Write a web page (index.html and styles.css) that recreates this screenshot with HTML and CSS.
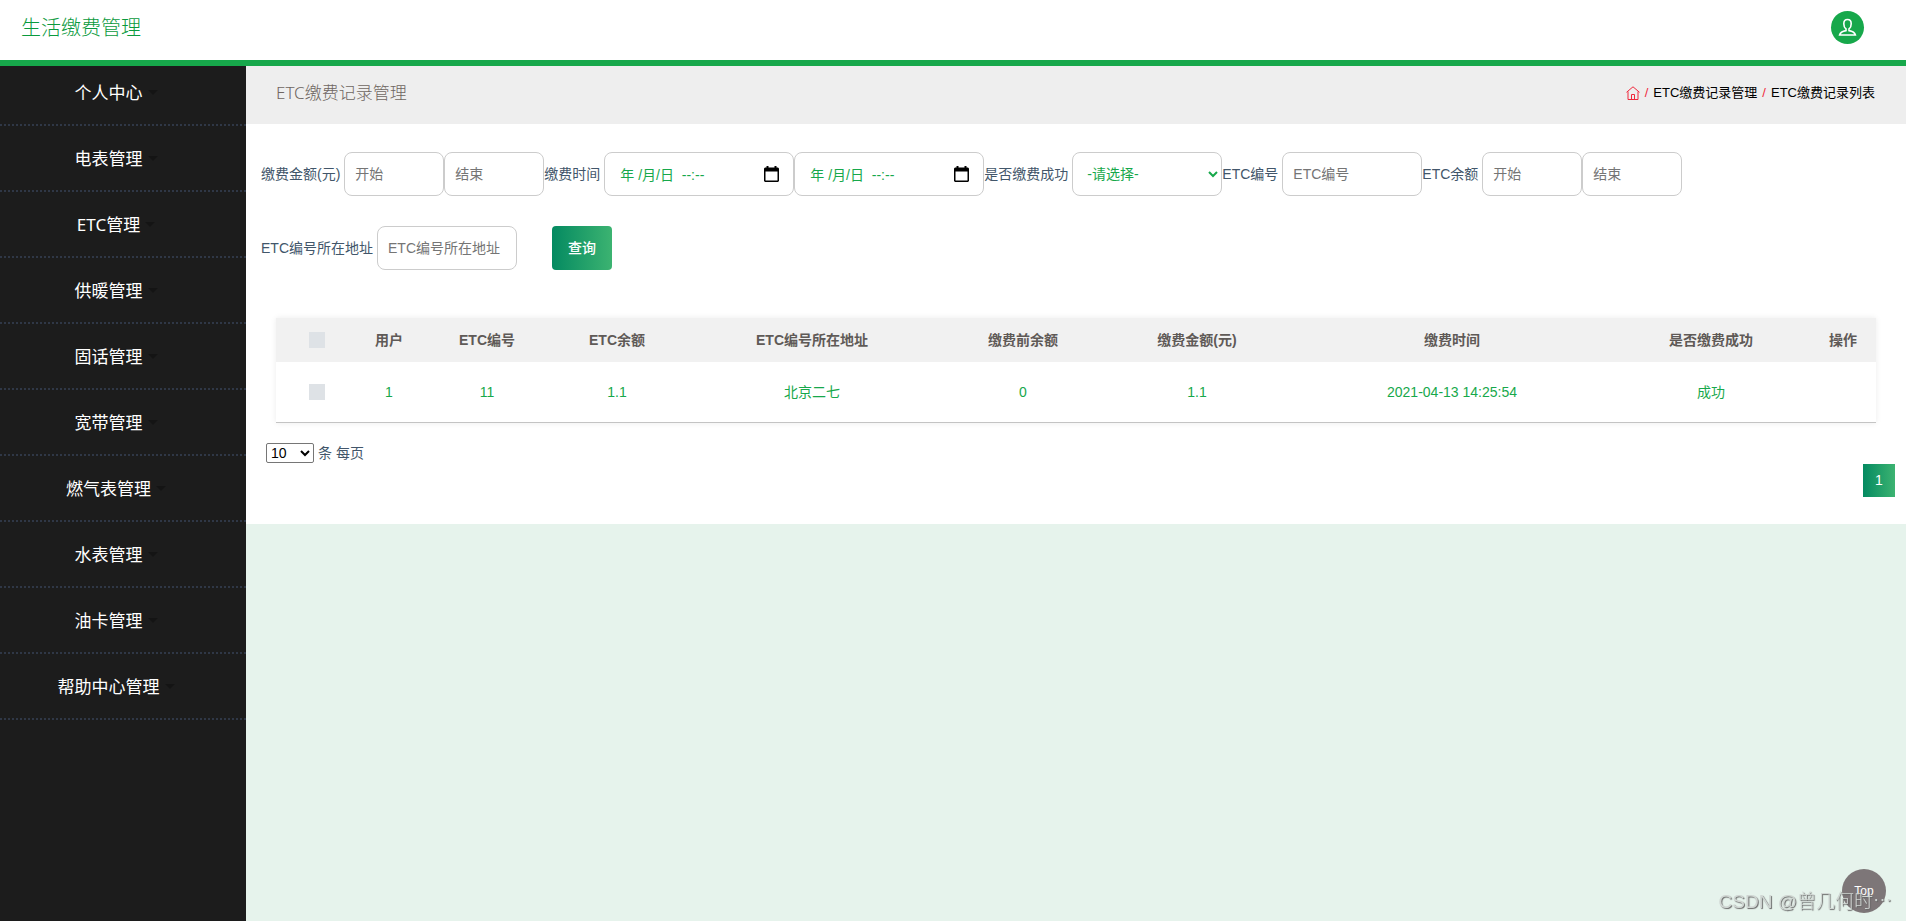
FILE: index.html
```html
<!DOCTYPE html>
<html lang="zh-CN">
<head>
<meta charset="utf-8">
<title>生活缴费管理</title>
<link rel="stylesheet" href="styles.css">
</head>
<body>
<header class="topbar">
  <h1 class="brand">生活缴费管理</h1>
  <button class="avatar" type="button" aria-label="用户">
    <svg viewBox="0 0 33 33" aria-hidden="true"><path d="M16.5 8.500c-2.500 0-3.700 1.600-3.700 4.200 0 2.300.7 4.200 2.200 5.300v1.600c-3.800.6-5.800 1.900-6.400 4.400h15.800c-.6-2.500-2.600-3.800-6.400-4.400V18c1.500-1.100 2.200-3 2.200-5.300 0-2.600-1.200-4.200-3.700-4.200z"/></svg>
  </button>
</header>
<div class="layout">
  <nav class="sidebar">
    <ul class="menu">
      <li><a href="#">个人中心<i class="caret"></i></a></li>
      <li><a href="#">电表管理<i class="caret"></i></a></li>
      <li><a href="#">ETC管理<i class="caret"></i></a></li>
      <li><a href="#">供暖管理<i class="caret"></i></a></li>
      <li><a href="#">固话管理<i class="caret"></i></a></li>
      <li><a href="#">宽带管理<i class="caret"></i></a></li>
      <li><a href="#">燃气表管理<i class="caret"></i></a></li>
      <li><a href="#">水表管理<i class="caret"></i></a></li>
      <li><a href="#">油卡管理<i class="caret"></i></a></li>
      <li><a href="#">帮助中心管理<i class="caret"></i></a></li>
    </ul>
  </nav>
  <main class="content">
    <div class="page-head">
      <h2 class="page-title">ETC缴费记录管理</h2>
      <nav class="crumbs" aria-label="路径">
        <a class="home" href="#" aria-label="首页"><svg viewBox="0 0 14 14" aria-hidden="true"><path d="M.5 6.300 7 .8l6.500 5.500M2 5.500v8h10v-8M5.500 13.500V8.500h3v5"/></svg></a>
        <span class="slash">/</span>
        <a href="#">ETC缴费记录管理</a>
        <span class="slash">/</span>
        <span>ETC缴费记录列表</span>
      </nav>
    </div>
    <section class="panel">
      <form class="filters">
        <div class="field">
          <label for="amount-from">缴费金额(元)</label>
          <input id="amount-from" class="short" type="text" placeholder="开始"><input class="short" type="text" placeholder="结束" aria-label="缴费金额结束">
        </div>
        <div class="field">
          <label for="time-from">缴费时间</label>
          <div class="datetime">
            <input id="time-from" type="text" value="年 /月/日 &nbsp;--:--">
            <button type="button" aria-label="选择日期"><svg viewBox="0 0 15 16" aria-hidden="true"><path d="M2.500 0h2v1.500h6V0h2v1.500H14l1 1V15l-1 1H1l-1-1V2.500l1-1h1.500zM1.500 5.500v9h12v-9z" fill-rule="evenodd"/></svg></button>
          </div>
          <div class="datetime">
            <input type="text" value="年 /月/日 &nbsp;--:--" aria-label="缴费时间结束">
            <button type="button" aria-label="选择日期"><svg viewBox="0 0 15 16" aria-hidden="true"><path d="M2.500 0h2v1.500h6V0h2v1.500H14l1 1V15l-1 1H1l-1-1V2.500l1-1h1.500zM1.500 5.500v9h12v-9z" fill-rule="evenodd"/></svg></button>
          </div>
        </div>
        <div class="field">
          <label for="paid">是否缴费成功</label>
          <select id="paid"><option>-请选择-</option><option>成功</option></select>
        </div>
        <div class="field">
          <label for="etc-no">ETC编号</label>
          <input id="etc-no" type="text" placeholder="ETC编号">
        </div>
        <div class="field">
          <label for="balance-from">ETC余额</label>
          <input id="balance-from" class="short" type="text" placeholder="开始"><input class="short" type="text" placeholder="结束" aria-label="ETC余额结束">
        </div>
        <div class="field">
          <label for="etc-addr">ETC编号所在地址</label>
          <input id="etc-addr" type="text" placeholder="ETC编号所在地址">
        </div>
        <button class="search" type="button">查询</button>
      </form>
      <table class="records">
        <colgroup>
          <col class="c-check"><col class="c-user"><col class="c-no"><col class="c-balance"><col class="c-addr">
          <col class="c-before"><col class="c-amount"><col class="c-time"><col class="c-paid"><col class="c-action">
        </colgroup>
        <thead>
          <tr>
            <th><input type="checkbox" aria-label="全选"></th>
            <th>用户</th><th>ETC编号</th><th>ETC余额</th><th>ETC编号所在地址</th>
            <th>缴费前余额</th><th>缴费金额(元)</th><th>缴费时间</th><th>是否缴费成功</th><th>操作</th>
          </tr>
        </thead>
        <tbody>
          <tr>
            <td><input type="checkbox" aria-label="选择"></td>
            <td>1</td><td>11</td><td>1.1</td><td>北京二七</td>
            <td>0</td><td>1.1</td><td>2021-04-13 14:25:54</td><td>成功</td><td></td>
          </tr>
        </tbody>
      </table>
      <div class="page-size">
        <select id="size"><option>10</option><option>25</option></select>
        <label for="size">条 每页</label>
      </div>
      <div class="pager"><button type="button">1</button></div>
    </section>
  </main>
</div>
<a class="to-top" href="#">Top</a>
<div class="watermark">CSDN @曾几何时⋯</div>
</body>
</html>
```
FILE: styles.css
```css
* { box-sizing: border-box; }

body {
  margin: 0;
  min-height: 100vh;
  display: flex;
  flex-direction: column;
  background: #e6f3ec;
  color: #455a64;
  font-family: "Liberation Sans", "Noto Sans CJK SC", sans-serif;
  font-size: 14px;
  line-height: 20px;
}

a { color: inherit; text-decoration: none; }
input, select, button { font: inherit; margin: 0; }

.topbar {
  display: flex;
  justify-content: space-between;
  padding: 11px 42px 0 21px;
  height: 66px;
  background: #fff;
  border-bottom: 6px solid #17a84b;
}
.brand {
  margin: 0;
  font-size: 20px;
  line-height: 34px;
  font-weight: 300;
  color: #0a9a3d;
}
.avatar {
  width: 33px;
  height: 33px;
  padding: 0;
  border: 0;
  border-radius: 50%;
  background: #17a84b;
}
.avatar svg { display: block; fill: none; stroke: #fff; stroke-width: 1.6; }

.layout { flex: 1; display: flex; }

.sidebar {
  flex: 0 0 246px;
  background: #1c1c1c;
}
.menu { list-style: none; margin: 0; padding: 0; }
.menu a {
  display: flex;
  align-items: center;
  justify-content: center;
  gap: 5px;
  height: 66px;
  padding: 1px 14px 0 0;
  border-bottom: 2px dotted #2f3746;
  color: #fff;
  font-family: "Noto Sans", "Noto Sans CJK SC", sans-serif;
  font-size: 17px;
}
.menu li:first-child a { height: 60px; padding: 0 14px 5px 0; }
.caret {
  border: 5px solid transparent;
  border-top-color: #141414;
  border-bottom: 0;
}

.content { flex: 1; min-width: 0; }
.page-head {
  display: flex;
  justify-content: space-between;
  align-items: center;
  padding: 17px 31px 21px 30px;
  background: #eee;
}
.page-title {
  margin: 0;
  font-family: "Noto Sans", "Noto Sans CJK SC", sans-serif;
  font-size: 17px;
  line-height: 20px;
  font-weight: 300;
  color: #6f6661;
}
.crumbs {
  display: flex;
  align-items: center;
  gap: 5px;
  font-size: 13px;
  color: #000;
}
.home svg { display: block; width: 14px; height: 14px; fill: none; stroke: #f0283c; }
.slash { color: #f0283c; }

.panel { background: #fff; padding: 28px 11px 27px 15px; }

.filters {
  display: flex;
  flex-wrap: wrap;
  row-gap: 30px;
  padding-right: 150px;
}
.field { display: flex; align-items: center; }
.field label { margin-right: 4px; color: #42566a; }
.field input, .field select {
  width: 140px;
  height: 44px;
  padding: 0 10px;
  border: 1px solid #ccc;
  border-radius: 8px;
  background: #fff;
  color: #17a84b;
}
.field input::placeholder { color: #757575; }
.field .short { width: 100px; }
.field select { width: 150px; padding: 0 0 0 10px; }
.datetime { display: grid; align-items: center; }
.datetime input { grid-area: 1 / 1; width: 190px; padding: 0 40px 0 15px; }
.datetime button {
  grid-area: 1 / 1;
  justify-self: end;
  width: 15px;
  margin-right: 15px;
  padding: 0;
  border: 0;
  background: none;
}
.datetime svg { display: block; }
.search {
  width: 60px;
  height: 44px;
  margin-left: 35px;
  padding: 0;
  border: 0;
  border-radius: 4px;
  background: linear-gradient(90deg, #048a61, #3cb371);
  color: #fff;
  font-weight: 500;
}

.records {
  width: calc(100% - 34px);
  margin: 48px 0 0 15px;
  table-layout: fixed;
  border-collapse: collapse;
  box-shadow: 0 0 6px rgba(0, 0, 0, 0.08);
  text-align: center;
}
.records th, .records td { padding: 0; }
.records th { height: 44px; background: #f1f1f1; color: #5f5a57; font-weight: 700; }
.records td { height: 60px; color: #17a84b; border-bottom: 1px solid #c4c4c4; }
.records input {
  appearance: none;
  display: block;
  width: 16px;
  height: 16px;
  margin: 0 auto;
  background: #dee2e6;
}
.c-check { width: 82px; }
.c-user { width: 62px; }
.c-no { width: 134px; }
.c-balance { width: 126px; }
.c-addr { width: 264px; }
.c-before { width: 158px; }
.c-amount { width: 190px; }
.c-time { width: 320px; }
.c-paid { width: 198px; }
.c-action { width: 66px; }

.page-size {
  display: flex;
  align-items: center;
  gap: 4px;
  margin: 20px 0 0 5px;
  color: #42566a;
}
.page-size select {
  width: 48px;
  height: 20px;
  padding: 0;
  border: 1px solid #767676;
  border-radius: 2px;
  background: #fff;
  color: #000;
}
.pager { display: flex; justify-content: flex-end; margin-top: 1px; }
.pager button {
  width: 32px;
  height: 33px;
  padding: 0;
  border: 0;
  background: linear-gradient(90deg, #048a61, #3cb371);
  color: #fff;
}

.to-top {
  position: fixed;
  right: 20px;
  bottom: 8px;
  width: 44px;
  height: 44px;
  border-radius: 50%;
  background: #7d7678;
  color: #fff;
  font-size: 12px;
  line-height: 44px;
  text-align: center;
}
.watermark {
  position: fixed;
  right: 14px;
  bottom: 6px;
  font-size: 19px;
  line-height: 26px;
  font-weight: 300;
  color: #d0d6d3;
  text-shadow: 1px 1px 1px #666;
  pointer-events: none;
}
```
